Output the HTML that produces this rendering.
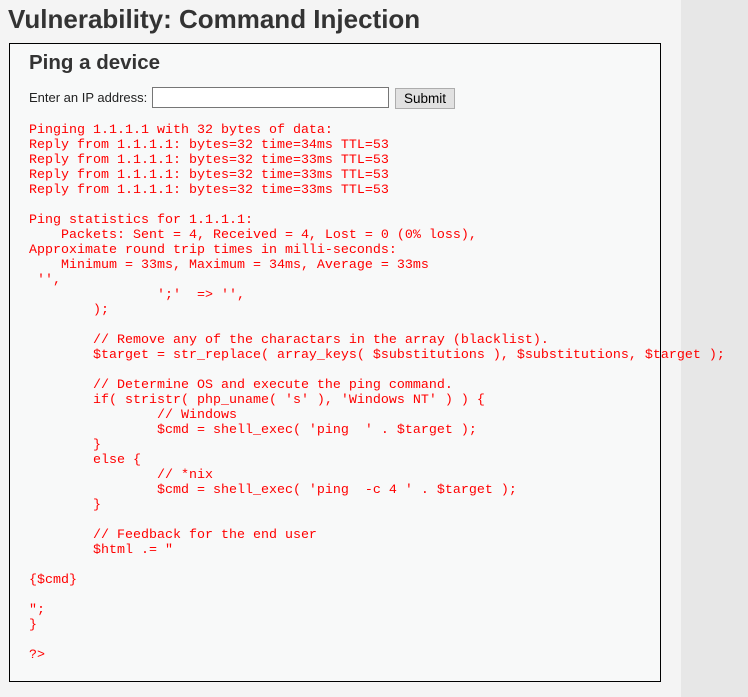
<!DOCTYPE html>
<html><head><meta charset="utf-8"><style>
body{margin:0;width:748px;height:697px;background:#f4f4f4;font-family:"Liberation Sans",Arial,sans-serif;position:relative;overflow:hidden}
.band{position:absolute;left:681px;top:0;width:67px;height:697px;background:#e7e7e7}
h1{position:absolute;left:8px;top:4px;margin:0;font-size:26px;font-weight:bold;color:#333;line-height:30px}
.box{position:absolute;left:9px;top:43px;width:650px;height:637px;border:1px solid #000;background:#f8f9f9}
h2{position:absolute;left:19px;top:7px;margin:0;font-size:20.5px;font-weight:bold;color:#333;line-height:24px}
.lbl{position:absolute;left:19px;top:46px;font-size:13px;color:#222}
.inp{position:absolute;left:142px;top:43px;width:235px;height:19px;border:1px solid #767676;background:#fff}
.btn{position:absolute;left:385px;top:44px;width:58px;height:19px;border:1px solid #adadad;background:#e1e1e1;font-size:13.5px;text-align:center;line-height:19px;color:#000}
pre{position:absolute;left:19px;top:79px;margin:0;font-family:"Liberation Mono","Courier New",monospace;font-size:13.33px;line-height:15px;color:#f00;white-space:pre}
</style></head><body>
<div class="band"></div>
<h1>Vulnerability: Command Injection</h1>
<div class="box">
<h2>Ping a device</h2>
<div class="lbl">Enter an IP address:</div>
<div class="inp"></div>
<div class="btn">Submit</div>
<pre>Pinging 1.1.1.1 with 32 bytes of data:
Reply from 1.1.1.1: bytes=32 time=34ms TTL=53
Reply from 1.1.1.1: bytes=32 time=33ms TTL=53
Reply from 1.1.1.1: bytes=32 time=33ms TTL=53
Reply from 1.1.1.1: bytes=32 time=33ms TTL=53

Ping statistics for 1.1.1.1:
    Packets: Sent = 4, Received = 4, Lost = 0 (0% loss),
Approximate round trip times in milli-seconds:
    Minimum = 33ms, Maximum = 34ms, Average = 33ms
 '',
                ';'  =&gt; '',
        );

        // Remove any of the charactars in the array (blacklist).
        $target = str_replace( array_keys( $substitutions ), $substitutions, $target );

        // Determine OS and execute the ping command.
        if( stristr( php_uname( 's' ), 'Windows NT' ) ) {
                // Windows
                $cmd = shell_exec( 'ping  ' . $target );
        }
        else {
                // *nix
                $cmd = shell_exec( 'ping  -c 4 ' . $target );
        }

        // Feedback for the end user
        $html .= "

{$cmd}

";
}

?&gt;</pre>
</div>
</body></html>
